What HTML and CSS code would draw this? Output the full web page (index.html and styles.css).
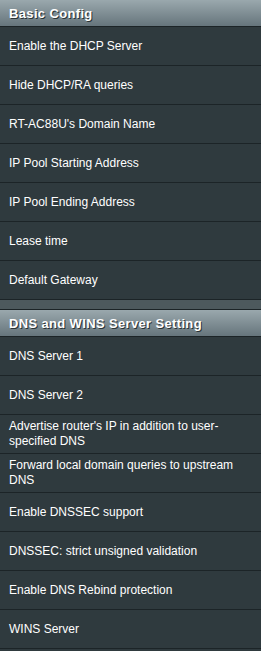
FILE: index.html
```html
<!DOCTYPE html>
<html lang="en">
<head>
    <meta charset="UTF-8">
    <meta name="viewport" content="width=device-width, initial-scale=1.0">
    <title>LAN - DHCP Server</title>
    <link rel="stylesheet" href="styles.css">
</head>
<body>

    <div class="form-table">
        <div class="form-head">Basic Config</div>
        <div class="form-row">Enable the DHCP Server</div>
        <div class="form-row">Hide DHCP/RA queries</div>
        <div class="form-row">RT-AC88U's Domain Name</div>
        <div class="form-row">IP Pool Starting Address</div>
        <div class="form-row">IP Pool Ending Address</div>
        <div class="form-row">Lease time</div>
        <div class="form-row">Default Gateway</div>
    </div>

    <div class="form-table second">
        <div class="form-head">DNS and WINS Server Setting</div>
        <div class="form-row">DNS Server 1</div>
        <div class="form-row">DNS Server 2</div>
        <div class="form-row">Advertise router's IP in addition to user-specified DNS</div>
        <div class="form-row">Forward local domain queries to upstream DNS</div>
        <div class="form-row">Enable DNSSEC support</div>
        <div class="form-row">DNSSEC: strict unsigned validation</div>
        <div class="form-row">Enable DNS Rebind protection</div>
        <div class="form-row">WINS Server</div>
    </div>

</body>
</html>
```

FILE: styles.css
```css
body {
    margin: 0;
    background-color: #4d595d;
    font-family: "Liberation Sans", Arial, sans-serif;
    color: #ffffff;
}

.form-table {
    background-color: #2f3a3e;
}

.form-table.second {
    margin-top: 9px;
    border-top: 1px solid #1c2427;
    padding-bottom: 2px;
}

.form-head {
    height: 26px;
    line-height: 27px;
    padding-left: 9px;
    font-size: 13px;
    font-weight: bold;
    letter-spacing: 0.35px;
    background: linear-gradient(to bottom, #9aa8ad 0%, #66757c 100%);
    text-shadow: 1px 1px 0 #2a3336;
    border-bottom: 1px solid #1c2427;
}

.form-row {
    display: flex;
    align-items: center;
    min-height: 38px;
    padding: 0 18px 0 9px;
    font-size: 12px;
    line-height: 15px;
    border-bottom: 1px solid #1c2427;
}
```
